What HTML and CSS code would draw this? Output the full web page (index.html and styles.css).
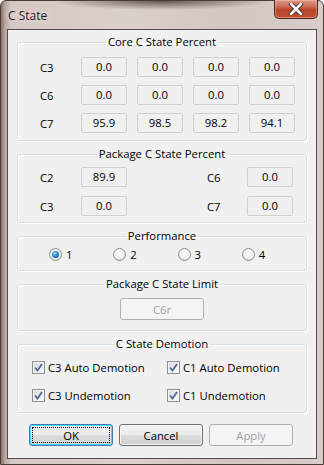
FILE: index.html
```html
<!DOCTYPE html>
<html lang="en">
<head>
    <meta charset="UTF-8">
    <meta name="viewport" content="width=device-width, initial-scale=1.0">
    <title>C State</title>
    <link rel="stylesheet" href="styles.css">
</head>
<body>
    <div class="window">
        <div class="titlebar">
            <span class="title">C State</span>
            <button class="close-btn" aria-label="Close">
                <svg width="16" height="12" viewBox="0 0 16 12">
                    <path d="M3 1 L13 11 M13 1 L3 11" stroke="#3b2a26" stroke-width="4.4" stroke-linecap="round"/>
                    <path d="M3 1 L13 11 M13 1 L3 11" stroke="#ffffff" stroke-width="2.6" stroke-linecap="round"/>
                </svg>
            </button>
        </div>

        <div class="client">
            <fieldset class="group">
                <legend>Core C State Percent</legend>
                <div class="grid core">
                    <span class="lbl">C3</span>
                    <span class="val">0.0</span><span class="val">0.0</span><span class="val">0.0</span><span class="val">0.0</span>
                    <span class="lbl">C6</span>
                    <span class="val">0.0</span><span class="val">0.0</span><span class="val">0.0</span><span class="val">0.0</span>
                    <span class="lbl">C7</span>
                    <span class="val">95.9</span><span class="val">98.5</span><span class="val">98.2</span><span class="val">94.1</span>
                </div>
            </fieldset>

            <fieldset class="group">
                <legend>Package C State Percent</legend>
                <div class="grid package">
                    <span class="lbl">C2</span>
                    <span class="val">89.9</span>
                    <span class="lbl right">C6</span>
                    <span class="val">0.0</span>
                    <span class="lbl">C3</span>
                    <span class="val">0.0</span>
                    <span class="lbl right">C7</span>
                    <span class="val">0.0</span>
                </div>
            </fieldset>

            <fieldset class="group">
                <legend>Performance</legend>
                <div class="radios">
                    <label class="radio-item"><span class="radio checked"></span>1</label>
                    <label class="radio-item"><span class="radio"></span>2</label>
                    <label class="radio-item"><span class="radio"></span>3</label>
                    <label class="radio-item"><span class="radio"></span>4</label>
                </div>
            </fieldset>

            <fieldset class="group">
                <legend>Package C State Limit</legend>
                <div class="limit">
                    <button class="btn disabled">C6r</button>
                </div>
            </fieldset>

            <fieldset class="group">
                <legend>C State Demotion</legend>
                <div class="checks">
                    <label class="check-item"><span class="check"><svg width="9" height="9" viewBox="0 0 9 9"><path d="M1 4.5 L3.5 7.5 L8 1" fill="none" stroke="#4e6597" stroke-width="1.8"/></svg></span>C3 Auto Demotion</label>
                    <label class="check-item"><span class="check"><svg width="9" height="9" viewBox="0 0 9 9"><path d="M1 4.5 L3.5 7.5 L8 1" fill="none" stroke="#4e6597" stroke-width="1.8"/></svg></span>C1 Auto Demotion</label>
                    <label class="check-item"><span class="check"><svg width="9" height="9" viewBox="0 0 9 9"><path d="M1 4.5 L3.5 7.5 L8 1" fill="none" stroke="#4e6597" stroke-width="1.8"/></svg></span>C3 Undemotion</label>
                    <label class="check-item"><span class="check"><svg width="9" height="9" viewBox="0 0 9 9"><path d="M1 4.5 L3.5 7.5 L8 1" fill="none" stroke="#4e6597" stroke-width="1.8"/></svg></span>C1 Undemotion</label>
                </div>
            </fieldset>

            <div class="buttons">
                <button class="btn default"><span class="focus">OK</span></button>
                <button class="btn">Cancel</button>
                <button class="btn disabled">Apply</button>
            </div>
        </div>
    </div>
</body>
</html>
```

FILE: styles.css
```css
html, body {
    margin: 0;
    padding: 0;
}

body {
    width: 324px;
    height: 465px;
    overflow: hidden;
    font-family: "Open Sans", "Noto Sans", sans-serif;
    font-size: 11.3px;
    line-height: 15px;
    color: #000;
}

.window {
    box-sizing: border-box;
    width: 324px;
    height: 465px;
    border: 1px solid #4a3b37;
    border-radius: 6px 6px 0 0;
    background:
        radial-gradient(ellipse 110px 9px at 160px 0px, rgba(60, 48, 44, 0.75), rgba(60, 48, 44, 0) 100%),
        linear-gradient(to right, #8c726d 0px, #b9a5a0 4px, #d4c8c4 10px, #d9cfcb 40%, #d2c6c2 70%, #d8ccc8 100%);
    display: flex;
    flex-direction: column;
    padding: 0 6px 5px 6px;
}

.titlebar {
    height: 28px;
    display: flex;
    align-items: flex-start;
    justify-content: space-between;
}

.title {
    margin: 7px 0 0 1px;
    color: #1c1c1c;
    font-size: 12px;
    text-shadow: 0 0 6px rgba(255, 255, 255, 0.9);
}

.close-btn {
    width: 44px;
    height: 19px;
    margin: -1px -1px 0 0;
    padding: 0;
    border: 1px solid #4f2a22;
    border-top: none;
    border-radius: 0 0 5px 5px;
    background: linear-gradient(to bottom, #dc9a8a 0%, #cc6e58 35%, #b8432b 55%, #c25234 100%);
    box-shadow: inset 0 0 0 1px rgba(255, 200, 190, 0.4);
    display: flex;
    align-items: center;
    justify-content: center;
}

.client {
    flex: 1;
    background: #f0f0f0;
    border: 1px solid #5b4b47;
    padding: 5px 9px 0 9px;
    display: flex;
    flex-direction: column;
    gap: 6px;
}

.group {
    margin: 0;
    border: 1px solid #d5dfe5;
    border-radius: 3px;
    box-shadow: inset 1px 1px 0 #fff, 1px 1px 0 #fff;
    padding: 0;
    min-width: 0;
}

.group legend {
    margin: 0 auto;
    padding: 0 2px;
    line-height: 14px;
}

.grid {
    display: grid;
    grid-template-columns: 53px 46px 46px 46px 46px;
    column-gap: 10px;
    align-items: center;
}

.core {
    padding: 8px 0 7px 0;
    row-gap: 8px;
}

.package {
    grid-template-columns: 53px 46px 100px 46px;
    padding: 6px 0 6px 0;
    row-gap: 9px;
}

.lbl {
    padding-left: 22px;
}

.lbl.right {
    padding-left: 70px;
}

.val {
    height: 18px;
    line-height: 18px;
    border: 1px solid #d0d0d0;
    border-radius: 2px;
    text-align: center;
    background: #f0f0f0;
}

.radios {
    display: flex;
    padding: 4px 0 8px 31px;
}

.radio-item {
    width: 66px;
    display: flex;
    align-items: center;
    gap: 4px;
}

.radio {
    box-sizing: border-box;
    width: 13px;
    height: 13px;
    border-radius: 50%;
    border: 1px solid #8f8f8f;
    background: radial-gradient(circle at 50% 40%, #ffffff 0%, #f2f2f2 45%, #cfcfcf 100%);
    display: flex;
    align-items: center;
    justify-content: center;
}

.radio.checked::after {
    content: "";
    width: 7px;
    height: 7px;
    border-radius: 50%;
    background: radial-gradient(circle at 40% 35%, #a8e0ff 0%, #2f84d0 45%, #0d3f7d 100%);
}

.limit {
    display: flex;
    justify-content: center;
    padding: 7px 0 10px 0;
}

.checks {
    display: grid;
    grid-template-columns: 135px 135px;
    row-gap: 13px;
    padding: 9px 0 9px 14px;
}

.check-item {
    display: flex;
    align-items: center;
    gap: 3px;
}

.check {
    box-sizing: border-box;
    width: 13px;
    height: 13px;
    border: 1px solid #8e8f8f;
    background: linear-gradient(135deg, #d6d6d6, #ffffff);
    box-shadow: inset 0 0 0 1px #f4f4f4;
    display: flex;
    align-items: center;
    justify-content: center;
}

.btn {
    box-sizing: border-box;
    width: 84px;
    height: 22px;
    padding: 0;
    font-family: inherit;
    font-size: 11.3px;
    color: #000;
    border: 1px solid #707070;
    border-radius: 3px;
    background: linear-gradient(to bottom, #f2f2f2 0%, #ebebeb 48%, #dddddd 52%, #cfcfcf 100%);
    box-shadow: inset 0 0 0 1px rgba(255, 255, 255, 0.7);
}

.btn.disabled {
    color: #a0a0a0;
    border-color: #adb2b5;
    background: #f4f4f4;
    box-shadow: none;
}

.btn.default {
    border-color: #3c7fb1;
    box-shadow: inset 0 0 0 1px #48d8fb;
    padding: 2px;
}

.focus {
    display: flex;
    align-items: center;
    justify-content: center;
    height: 100%;
    border: 1px dotted #000;
    box-sizing: border-box;
}

.buttons {
    display: flex;
    gap: 6px;
    padding: 5px 0 0 12px;
}
```
